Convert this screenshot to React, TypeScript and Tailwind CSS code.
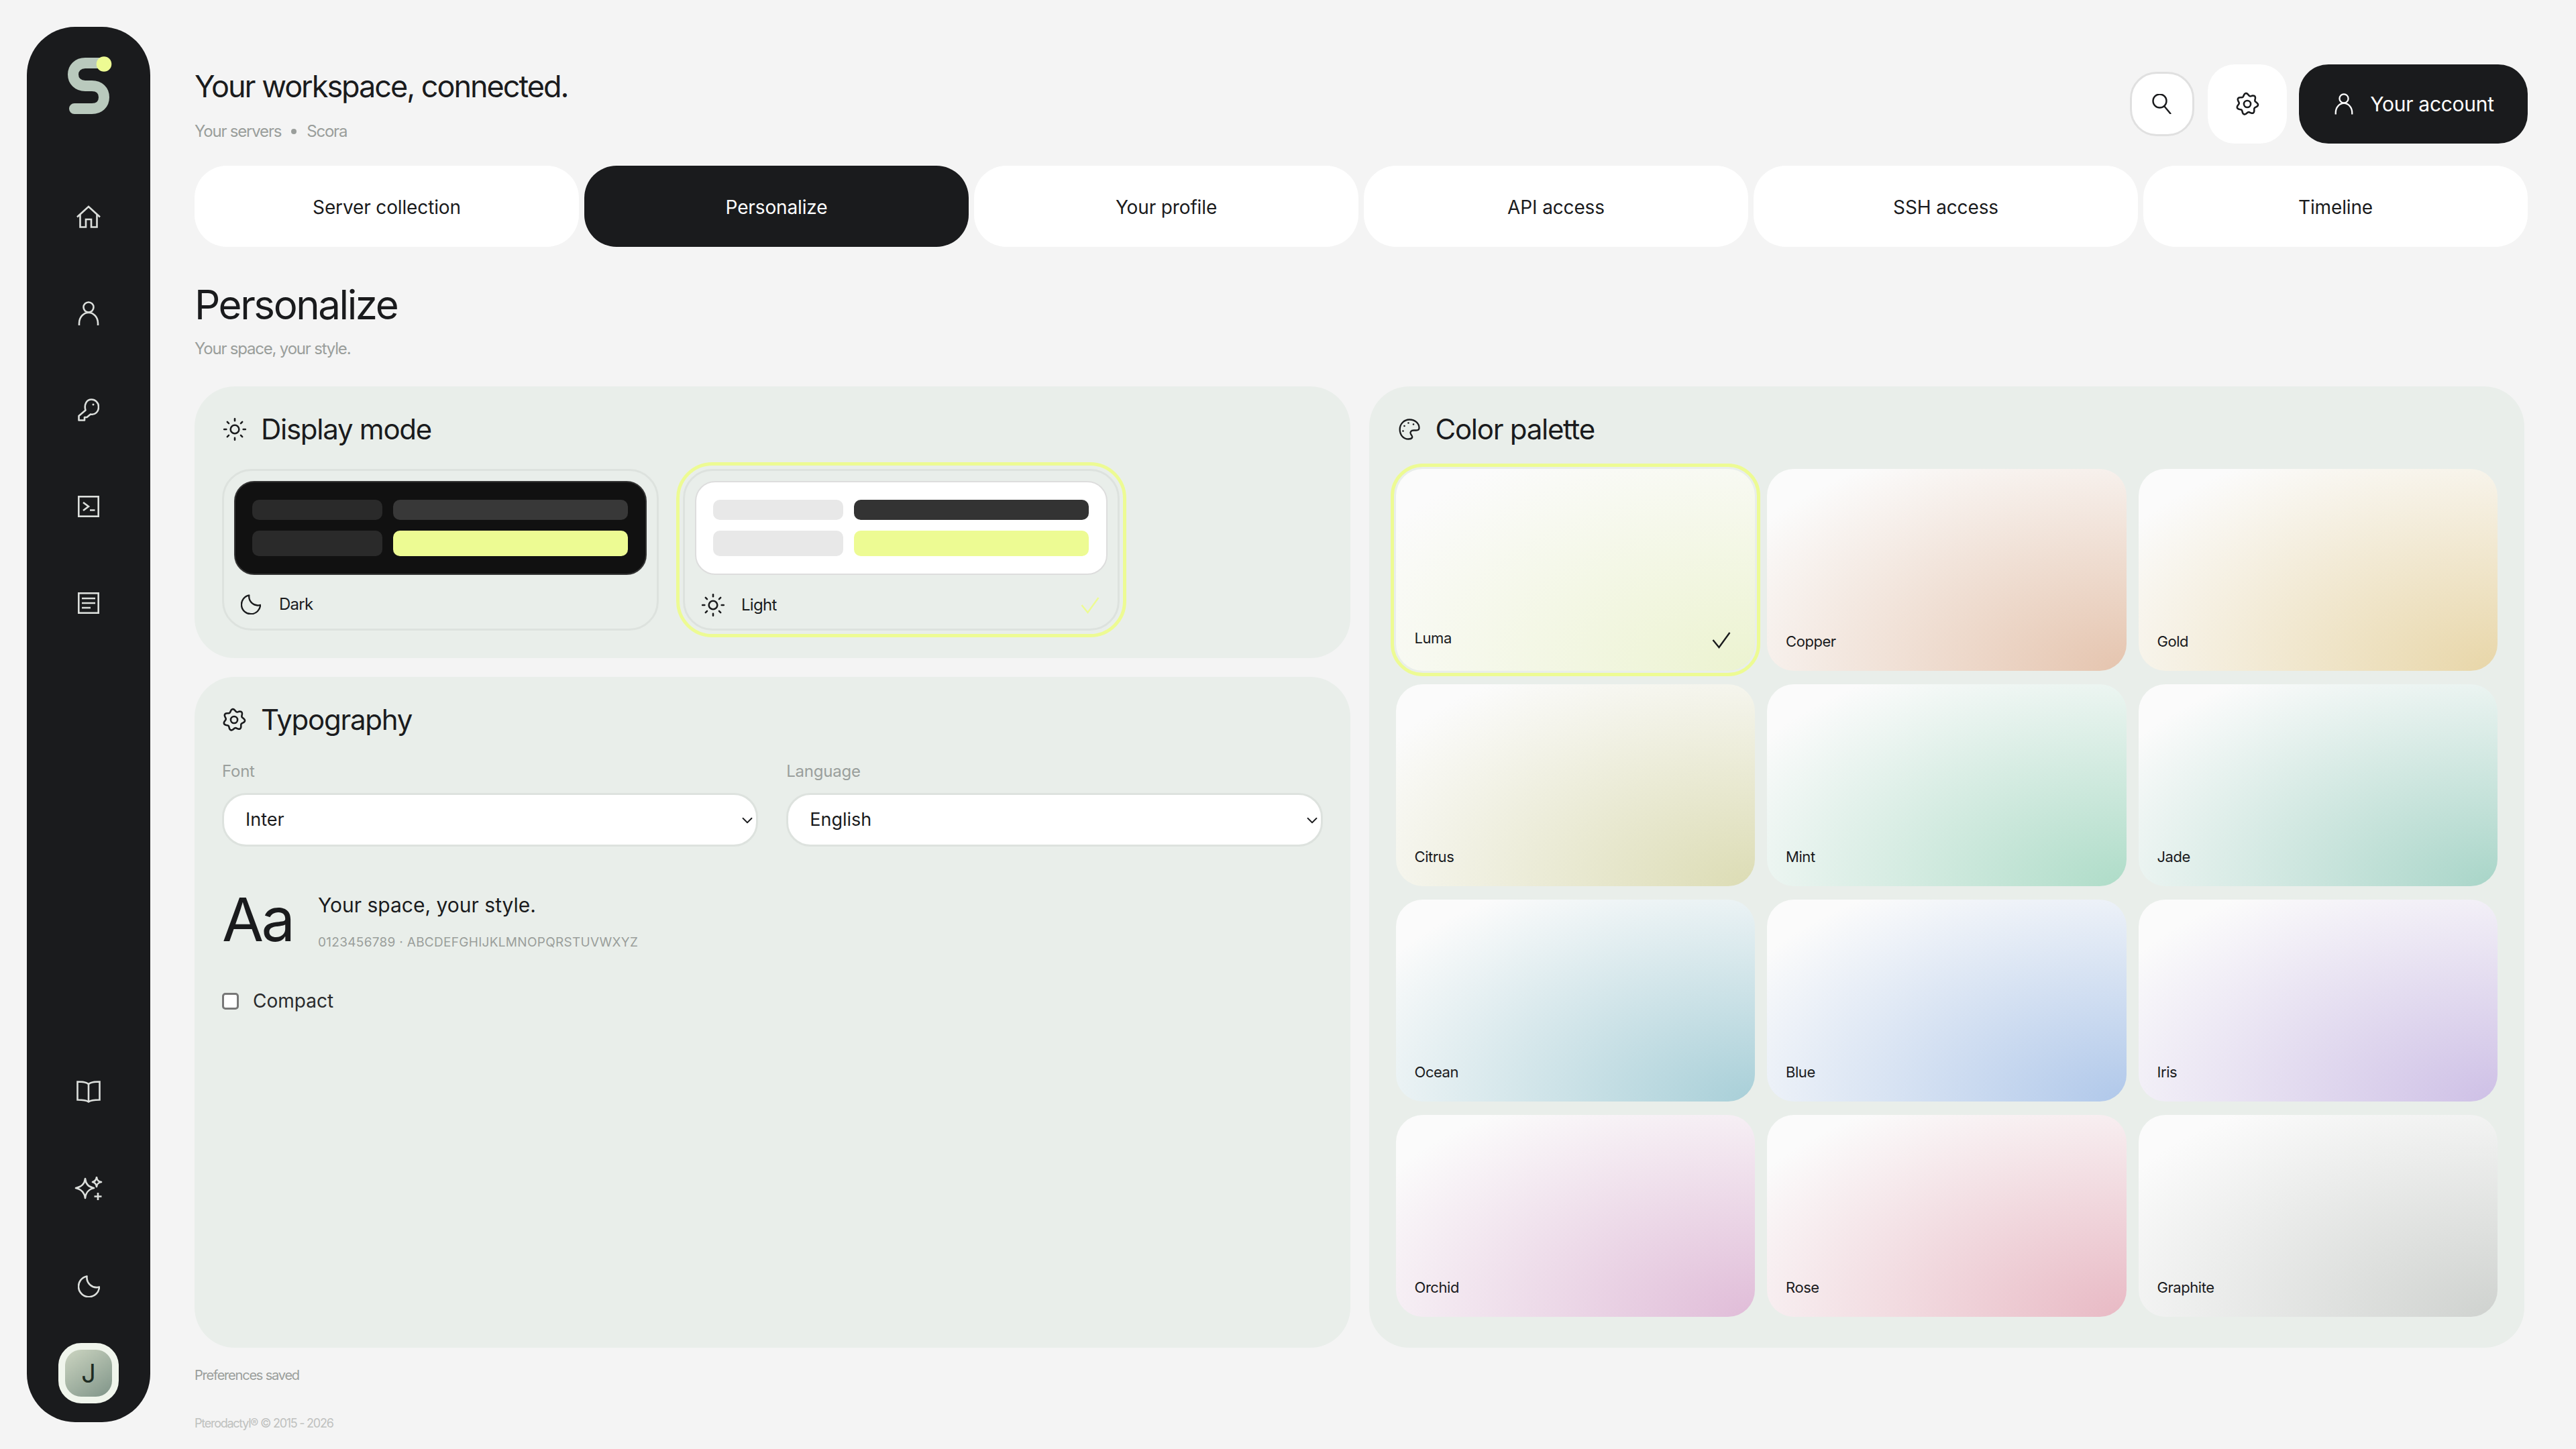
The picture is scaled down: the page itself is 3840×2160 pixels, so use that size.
import { ChevronDown, Sun } from 'lucide-react';

const tabs = ['Server collection', 'Personalize', 'Your profile', 'API access', 'SSH access', 'Timeline'];

const swatches = [
  { name: 'Copper', bg: 'bg-[radial-gradient(ellipse_at_100%_100%,#e5c4ae,#fbfbfb_88%)]' },
  { name: 'Gold', bg: 'bg-[radial-gradient(ellipse_at_100%_100%,#e8d6a8,#fbfbfb_88%)]' },
  { name: 'Citrus', bg: 'bg-[radial-gradient(ellipse_at_100%_100%,#dcdcb4,#fbfbfb_88%)]' },
  { name: 'Mint', bg: 'bg-[radial-gradient(ellipse_at_100%_100%,#aedcc8,#fbfbfb_88%)]' },
  { name: 'Jade', bg: 'bg-[radial-gradient(ellipse_at_100%_100%,#a8d5c8,#fbfbfb_88%)]' },
  { name: 'Ocean', bg: 'bg-[radial-gradient(ellipse_at_100%_100%,#a8cfd8,#fbfbfb_88%)]' },
  { name: 'Blue', bg: 'bg-[radial-gradient(ellipse_at_100%_100%,#b0c8ea,#fbfbfb_88%)]' },
  { name: 'Iris', bg: 'bg-[radial-gradient(ellipse_at_100%_100%,#cec0e6,#fbfbfb_88%)]' },
  { name: 'Orchid', bg: 'bg-[radial-gradient(ellipse_at_100%_100%,#e0bcd8,#fbfbfb_88%)]' },
  { name: 'Rose', bg: 'bg-[radial-gradient(ellipse_at_100%_100%,#e8b9c4,#fbfbfb_88%)]' },
  { name: 'Graphite', bg: 'bg-[radial-gradient(ellipse_at_100%_100%,#cfd2cf,#fbfbfb_88%)]' },
];

// wavy outline of the cog, seven soft lobes round the middle
const cogPath =
  Array.from({ length: 84 }, (_, i) => {
    const a = (i / 84) * Math.PI * 2;
    const r = 12.6 + 1.7 * Math.cos(7 * a - 0.6);
    return `${i === 0 ? 'M' : 'L'}${(16 + r * Math.cos(a)).toFixed(2)} ${(16 + r * Math.sin(a)).toFixed(2)}`;
  }).join('') + 'Z';

function CogIcon({ size = 36 }: { size?: number }) {
  return (
    <svg width={size} height={size} viewBox="0 0 32 32" fill="none" stroke="currentColor" strokeWidth="2.300">
      <path d={cogPath} strokeLinejoin="round" />
      <circle cx="16" cy="16" r="4.500" />
    </svg>
  );
}

function PaletteIcon() {
  return (
    <svg width="32" height="32" viewBox="0 0 31 32" fill="none" stroke="currentColor" strokeWidth="2.300">
      <path d="M15.500 1.500C24 1.500 30 7 30 14c0 2.500-2 3.500-4.500 3.500H22c-4.500 0-6 3-4.500 5.500 1.500 2.500 3 4 2 5.500-1 1.500-3.500 2-5.500 2C6.500 30.500 1.200 24.500 1.200 16 1.200 8 7.500 1.500 15.500 1.500Z" />
      <g fill="currentColor" stroke="none">
        <circle cx="8" cy="11" r="1.300" />
        <circle cx="14" cy="6.500" r="1.300" />
        <circle cx="21.500" cy="8.500" r="1.300" />
        <circle cx="6" cy="18.500" r="1.300" />
      </g>
    </svg>
  );
}

function HomeIcon() {
  return (
    <svg width="36" height="34" viewBox="0 0 36 34" fill="none" stroke="currentColor" strokeWidth="2.600">
      <path d="M1 17.500 18 2l17 15.500" />
      <path d="M5.500 14v18.500H14V21h8v11.500h8.500V14" />
    </svg>
  );
}

function UserIcon({ size = 32 }: { size?: number }) {
  return (
    <svg width={size} height={size * 1.125} viewBox="0 0 32 36" fill="none" stroke="currentColor" strokeWidth="2.600">
      <circle cx="16" cy="9" r="7.500" />
      <path d="M2 36v-3a14 16 0 0 1 28 0v3" />
    </svg>
  );
}

function KeyIcon() {
  return (
    <svg width="32" height="34" viewBox="0 0 32 34" fill="none" stroke="currentColor" strokeWidth="2.600" strokeLinejoin="round">
      <path d="M11.500 17.500 1.500 26v6.500h8.500V28h3.500l5.500-4.500C26 25 31 19.500 31 12.500 31 6 26 1.500 20.500 1.500 13 1.500 9 9 11.500 17.500Z" />
      <circle cx="23" cy="9" r="1.500" fill="currentColor" stroke="none" />
    </svg>
  );
}

function TerminalIcon() {
  return (
    <svg width="32" height="32" viewBox="0 0 32 32" fill="none" stroke="currentColor" strokeWidth="2.600">
      <rect x="1.300" y="1.300" width="29.400" height="29.400" />
      <path d="m8 10 8 6-8 6M18 21.500h7.500" />
    </svg>
  );
}

function NotesIcon() {
  return (
    <svg width="32" height="32" viewBox="0 0 32 32" fill="none" stroke="currentColor" strokeWidth="2.600">
      <rect x="1.300" y="1.300" width="29.400" height="29.400" />
      <path d="M6 9h20M6 16h20M6 23h13" />
    </svg>
  );
}

function BookIcon() {
  return (
    <svg width="36" height="33" viewBox="0 0 36 33" fill="none" stroke="currentColor" strokeWidth="2.600">
      <path d="M18 5C14 1.500 8 1.500 1.500 1.500v27c6.500 0 12.500 0 16.500 3 4-3 10-3 16.500-3v-27C28 1.500 22 1.500 18 5Z" />
      <path d="M18 5v26" />
    </svg>
  );
}

function SparklesIcon() {
  return (
    <svg width="42" height="38" viewBox="0 0 42 38" fill="none" stroke="currentColor" strokeWidth="2.600" strokeLinejoin="round">
      <path d="M16 3c1 8 4.500 12 13 14-8.500 2-12 6.500-13 15-1-8.500-5-13-14-15 9-2 13-6 14-14Z" />
      <path d="M33 1c.5 4 2 6 7 7-5 1-6.500 3-7 7-.5-4-2-6-6-7 4-1 5.500-3 6-7Z" />
      <path d="M35 24v11M29.500 29.500h11" />
    </svg>
  );
}

function MoonIcon({ size = 33 }: { size?: number }) {
  return (
    <svg width={size} height={size} viewBox="0 0 33 33" fill="none" stroke="currentColor" strokeWidth="2.600" strokeLinejoin="round">
      <path d="M13.500 1.500A15.500 15.500 0 1 0 32 17.500c-10.500 3-19.500-5.500-18.500-16Z" />
    </svg>
  );
}

function SearchIcon() {
  return (
    <svg width="30" height="30" viewBox="0 0 30 30" fill="none" stroke="#1a1b1d" strokeWidth="2.400">
      <circle cx="11.500" cy="10.500" r="10" />
      <path d="m18 18 10 12" />
    </svg>
  );
}

function CheckIcon({ className }: { className: string }) {
  return (
    <svg width="28" height="26" viewBox="0 0 28 26" fill="none" stroke="currentColor" strokeWidth="2.400" className={className}>
      <path d="m1.500 13 9 11L26.500 2" />
    </svg>
  );
}

function Logo() {
  return (
    <svg width="70" height="90" viewBox="0 0 70 90" fill="none">
      <path
        d="M56 14H30C19 14 12 21.500 12 31 12 40.500 19 48 30 48H40C51 48 58 55 58 65 58 75 51 82 40 82H14"
        stroke="#b9c9bd"
        strokeWidth="16"
        strokeLinecap="round"
      />
      <circle cx="58" cy="15.500" r="11.300" fill="#edfb93" />
    </svg>
  );
}

function Sidebar() {
  const top = [<HomeIcon />, <UserIcon />, <KeyIcon />, <TerminalIcon />, <NotesIcon />];
  const bottom = [<BookIcon />, <SparklesIcon />, <MoonIcon />];
  return (
    <aside className="w-[184px] h-[2080px] shrink-0 ml-[40px] mt-[40px] rounded-[72px] bg-[#1a1b1d] flex flex-col items-center text-[#dcdfdc]">
      <div className="mt-[40px] h-[90px] flex items-center justify-center">
        <Logo />
      </div>
      <nav className="mt-[81px] flex flex-col items-center">
        {top.map((icon, i) => (
          <div key={i} className="h-[144px] w-full flex items-center justify-center">
            {icon}
          </div>
        ))}
      </nav>
      <div className="mt-auto flex flex-col items-center">
        {bottom.map((icon, i) => (
          <div key={i} className="h-[145px] flex items-center justify-center">
            {icon}
          </div>
        ))}
      </div>
      <div className="mt-[12px] mb-[28px] w-[90px] h-[90px] rounded-[34px] border-[10px] border-[#f0f5ec] bg-[linear-gradient(145deg,#ccd5c1,#7f9488)] flex items-center justify-center text-[#1e2b22] text-[38px]">
        J
      </div>
    </aside>
  );
}

function Header() {
  return (
    <header className="h-[118px] flex items-start justify-between">
      <div className="pt-[5px]">
        <h1 className="text-[45px] leading-[56px] tracking-[-0.045em] text-[#1a1b1d]">Your workspace, connected.</h1>
        <p className="mt-[25px] flex items-center text-[24px] leading-[28px] tracking-[-0.05em] text-[#9a9e9b]">
          Your servers
          <span className="mx-[15px] w-[8px] h-[8px] rounded-full bg-[#9a9e9b]" />
          Scora
        </p>
      </div>
      <div className="flex items-center">
        <button className="w-[96px] h-[96px] rounded-[40px] bg-white border-[3px] border-[#e0e0e0] flex items-center justify-center">
          <SearchIcon />
        </button>
        <button className="ml-[20px] w-[118px] h-[118px] rounded-[40px] bg-white flex items-center justify-center text-[#1a1b1d]">
          <CogIcon />
        </button>
        <button className="ml-[18px] w-[341px] h-[118px] pl-[3px] rounded-[44px] bg-[#1a1b1d] text-white flex items-center justify-center gap-[25px] text-[30px] tracking-[-0.01em]">
          <UserIcon size={28} />
          Your account
        </button>
      </div>
    </header>
  );
}

function Tabs() {
  return (
    <div className="mt-[33px] grid grid-cols-6 gap-[8px]">
      {tabs.map((tab) => (
        <div
          key={tab}
          className={`h-[121px] pt-[2px] rounded-[48px] flex items-center justify-center text-[28px] tracking-[-0.005em] ${
            tab === 'Personalize' ? 'bg-[#1a1b1d] text-white' : 'bg-white text-[#1a1b1d]'
          }`}
        >
          {tab}
        </div>
      ))}
    </div>
  );
}

function PanelTitle({ icon, title, gap }: { icon: React.ReactNode; title: string; gap: string }) {
  return (
    <div className={`flex items-center h-[48px] text-[#1a1b1d] ${gap}`}>
      {icon}
      <h2 className="text-[42px] leading-[48px] tracking-[-0.03em]">{title}</h2>
    </div>
  );
}

function ModeCard({ mode }: { mode: 'dark' | 'light' }) {
  const dark = mode === 'dark';
  return (
    <div
      className={`w-[651px] h-[241px] rounded-[44px] border-[3px] border-[#dde2de] px-[15px] pt-[15px] flex flex-col ${
        dark ? '' : 'outline-[5px] outline-[#edfb93] outline-offset-[5px]'
      }`}
    >
      <div
        className={`h-[140px] rounded-[30px] px-[25px] pt-[26px] flex flex-col gap-[16px] border-[2px] ${
          dark ? 'bg-[#111111] border-[#333333]' : 'bg-white border-[#dddddd]'
        }`}
      >
        <div className="flex gap-[16px]">
          <div className={`w-[194px] h-[30px] rounded-[10px] ${dark ? 'bg-[#2a2a2a]' : 'bg-[#e8e8e8]'}`} />
          <div className={`w-[350px] h-[30px] rounded-[10px] ${dark ? 'bg-[#383838]' : 'bg-[#333333]'}`} />
        </div>
        <div className="flex gap-[16px]">
          <div className={`w-[194px] h-[38px] rounded-[10px] ${dark ? 'bg-[#2a2a2a]' : 'bg-[#e8e8e8]'}`} />
          <div className="w-[350px] h-[38px] rounded-[10px] bg-[#edfb93]" />
        </div>
      </div>
      <div className="mt-[26px] pl-[10px] pr-[12px] flex items-center text-[24px] tracking-[-0.03em] text-[#1a1b1d]">
        {dark ? <MoonIcon size={30} /> : <Sun size={38} strokeWidth={1.6} className="-ml-[2px]" />}
        <span className={dark ? 'ml-[27px]' : 'ml-[23px]'}>{dark ? 'Dark' : 'Light'}</span>
        {!dark && <CheckIcon className="ml-auto text-[#edfb93]" />}
      </div>
    </div>
  );
}

function FontSelect({ label, value }: { label: string; value: string }) {
  return (
    <label className="flex flex-col">
      <span className="text-[24px] leading-[30px] tracking-[-0.01em] text-[#9a9f9c]">{label}</span>
      <div className="relative mt-[17px]">
        <select
          defaultValue={value}
          className="w-full appearance-none h-[80px] rounded-[36px] border-[3px] border-[#dde2de] bg-white pl-[32px] pr-[30px] text-[27px] text-[#1a1b1d] outline-none"
        >
          <option>{value}</option>
        </select>
        <ChevronDown size={26} strokeWidth={1.700} className="absolute right-[3px] top-[28px] text-[#1a1b1d]" />
      </div>
    </label>
  );
}

function Swatch({ name, bg, selected }: { name: string; bg: string; selected?: boolean }) {
  return (
    <div
      className={`h-[301px] rounded-[40px] px-[28px] flex items-end ${bg} ${
        selected ? 'pb-[33px] outline-[5px] outline-[#edfb93] outline-offset-[3px]' : 'pb-[28px]'
      }`}
    >
      <span className="text-[22px] leading-[32px] tracking-[-0.02em] text-[#1a1b1d]">{name}</span>
      {selected && <CheckIcon className="ml-auto mr-[8px] text-[#1a1b1d]" />}
    </div>
  );
}

export default function App() {
  return (
    <div className="w-[3840px] h-[2160px] overflow-hidden flex bg-[#f4f4f4] font-['Inter',sans-serif]">
      <Sidebar />
      <main className="ml-[66px] w-[3478px] pt-[96px] flex flex-col">
        <Header />
        <Tabs />
        <h1 className="mt-[50px] text-[60px] leading-[72px] tracking-[-0.04em] text-[#1a1b1d]">Personalize</h1>
        <p className="mt-[16px] text-[24px] leading-[28px] tracking-[-0.05em] text-[#9a9e9b]">Your space, your style.</p>
        <div className="mt-[42px] mr-[5px] h-[1433px] grid grid-cols-2 gap-[28px]">
          <div className="flex flex-col gap-[28px]">
            <section className="h-[405px] rounded-[60px] bg-[#e9eeea] px-[41px] pt-[40px]">
              <PanelTitle icon={<Sun size={38} strokeWidth={1.6} />} title="Display mode" gap="gap-[20px]" />
              <div className="mt-[35px] flex gap-[36px]">
                <ModeCard mode="dark" />
                <ModeCard mode="light" />
              </div>
            </section>
            <section className="flex-1 rounded-[60px] bg-[#e9eeea] px-[41px] pt-[40px]">
              <PanelTitle icon={<CogIcon size={36} />} title="Typography" gap="gap-[22px]" />
              <div className="mt-[38px] grid grid-cols-2 gap-[42px]">
                <FontSelect label="Font" value="Inter" />
                <FontSelect label="Language" value="English" />
              </div>
              <div className="mt-[63px] flex items-end gap-[38px]">
                <span className="w-[105px] text-[90px] leading-[92px] tracking-[-0.04em] text-[#1a1b1d]">Aa</span>
                <div>
                  <p className="text-[30px] leading-[40px] text-[#1a1b1d]">Your space, your style.</p>
                  <p className="mt-[24px] text-[19px] leading-[24px] tracking-[0.3px] text-[#9a9e9b]">
                    0123456789 · ABCDEFGHIJKLMNOPQRSTUVWXYZ
                  </p>
                </div>
              </div>
              <label className="mt-[61px] flex items-center gap-[21px] text-[28px] leading-[28px] text-[#2a2b2d]">
                <span className="w-[25px] h-[25px] rounded-[5px] border-[3px] border-[#777777] bg-white" />
                Compact
              </label>
            </section>
          </div>
          <section className="rounded-[60px] bg-[#e9eeea] px-[40px] pt-[40px]">
            <div className="pl-[4px]">
              <PanelTitle icon={<PaletteIcon />} title="Color palette" gap="gap-[23px]" />
            </div>
            <div className="mt-[35px] grid grid-cols-3 gap-x-[18px] gap-y-[20px]">
              <Swatch name="Luma" bg="bg-[radial-gradient(ellipse_at_100%_100%,#ecf3d0,#fbfbfb_88%)]" selected />
              {swatches.map((s) => (
                <Swatch key={s.name} name={s.name} bg={s.bg} />
              ))}
            </div>
          </section>
        </div>
        <p className="mt-[27px] text-[20px] leading-[28px] tracking-[-0.06em] text-[#9a9e9b]">Preferences saved</p>
        <p className="mt-[44px] text-[18px] leading-[28px] tracking-[-0.07em] text-[#bfc1bf]">Pterodactyl® © 2015 - 2026</p>
      </main>
    </div>
  );
}
